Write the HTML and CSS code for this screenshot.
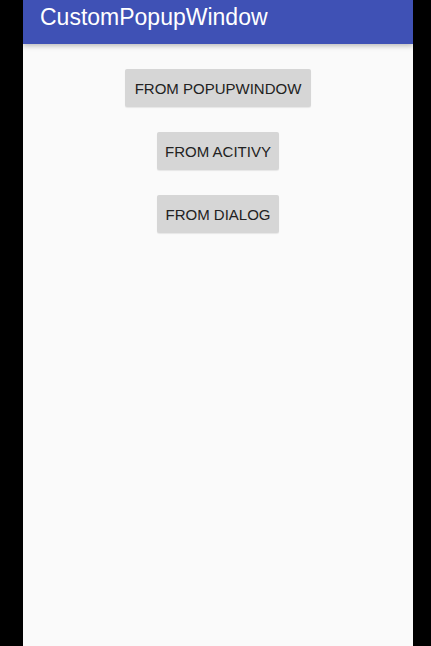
FILE: index.html
```html
<!DOCTYPE html>
<html>
<head>
<meta charset="utf-8">
<link rel="stylesheet" href="styles.css">
</head>
<body>
<div class="screen">
  <header class="appbar"><span class="title">CustomPopupWindow</span></header>
  <main class="content">
    <button class="btn btn-wide">FROM POPUPWINDOW</button>
    <button class="btn">FROM ACITIVY</button>
    <button class="btn">FROM DIALOG</button>
  </main>
</div>
</body>
</html>
```
FILE: styles.css
```css
html, body {
  margin: 0;
  padding: 0;
  background: #000;
  height: 100%;
}
.screen {
  margin-left: 23px;
  width: 390px;
  height: 646px;
  background: #fafafa;
  font-family: "Liberation Sans", Arial, sans-serif;
  overflow: hidden;
}
.appbar {
  height: 44px;
  background: #3f51b5;
  box-shadow: 0 2px 5px rgba(0,0,0,0.25);
  display: flex;
  align-items: flex-start;
  padding-left: 17px;
  position: relative;
}
.title {
  color: #fff;
  font-size: 23px;
  line-height: 34px;
}
.content {
  display: flex;
  flex-direction: column;
  align-items: center;
  gap: 25px;
  padding-top: 25px;
}
.btn {
  height: 38px;
  min-width: 122px;
  padding: 0 8px;
  border: none;
  border-radius: 2px;
  background: #d6d6d6;
  color: #222;
  font-family: "Liberation Sans", Arial, sans-serif;
  font-size: 15px;
  box-shadow: 0 1px 1px rgba(0,0,0,0.08);
}
.btn-wide {
  padding: 0 10px;
}
```
